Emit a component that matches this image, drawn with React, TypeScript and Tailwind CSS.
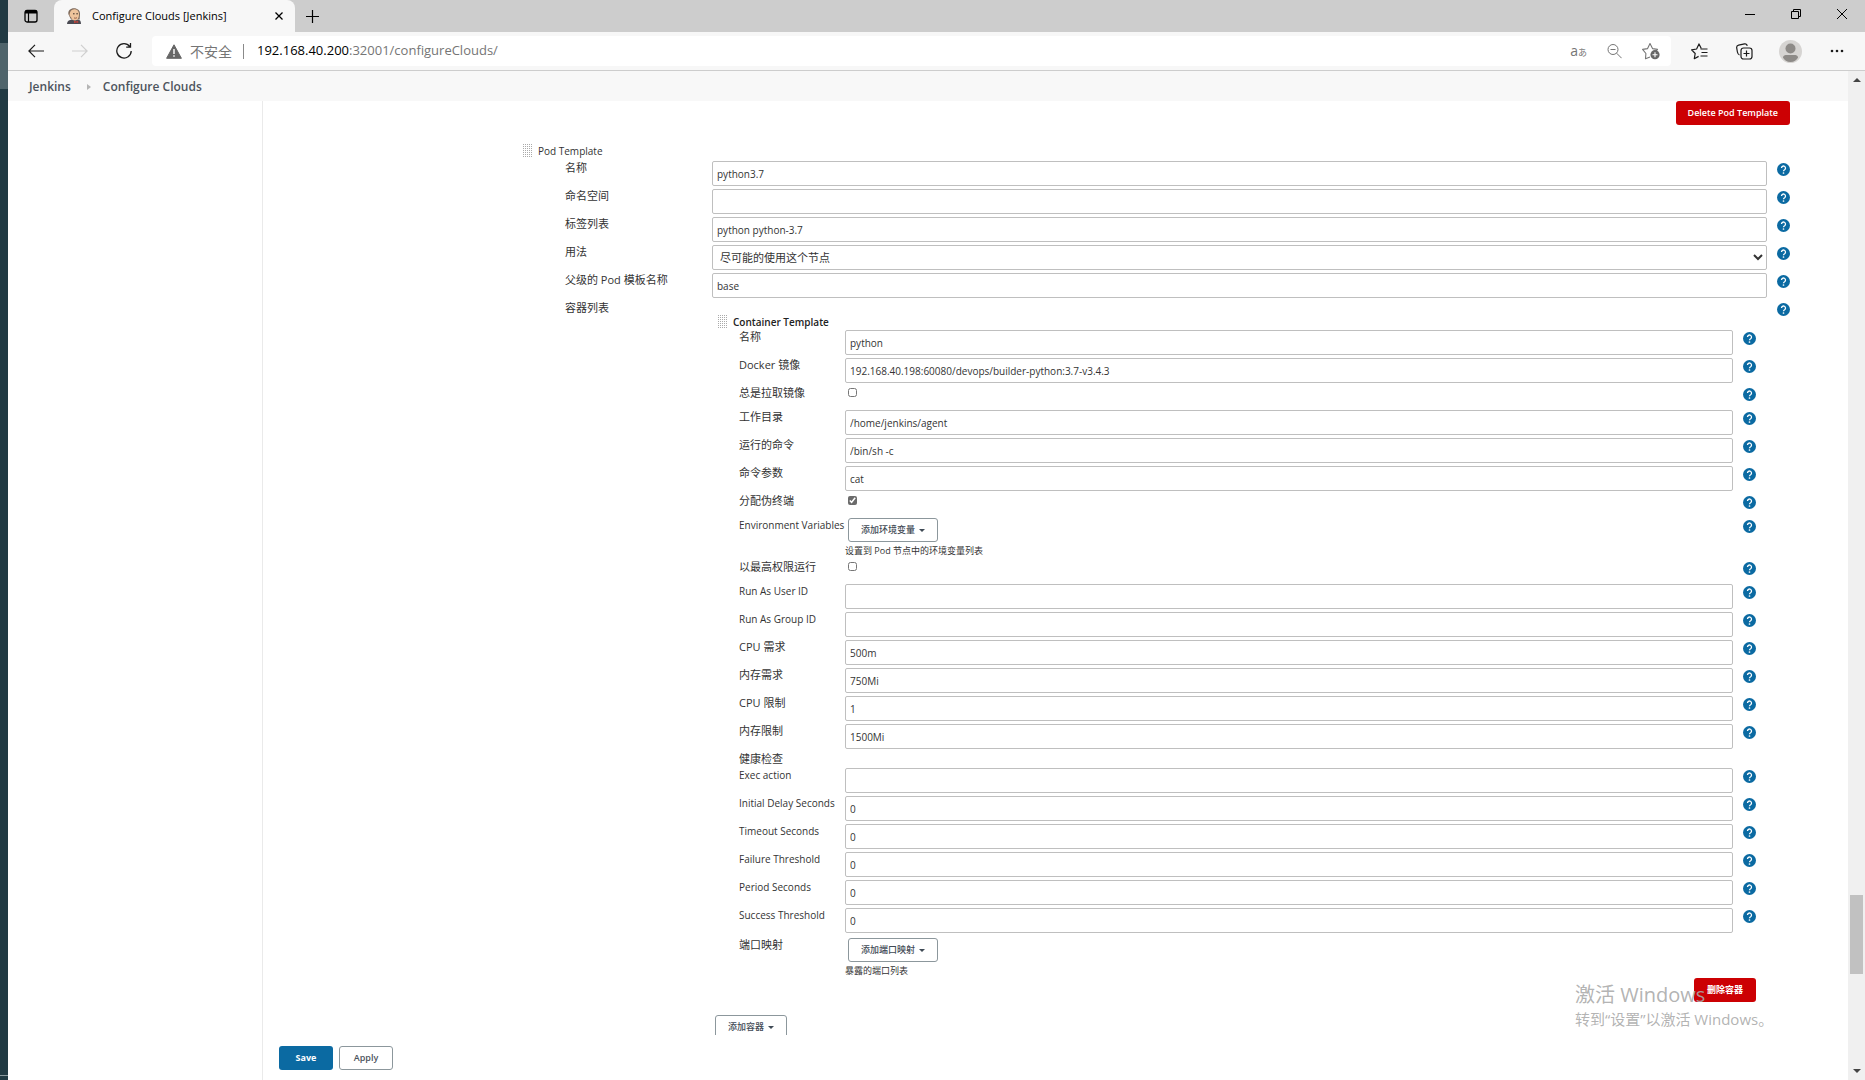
import { useId, useState } from 'react';
import type { ReactNode } from 'react';

type Field = {
  label: string;
  type?: 'text' | 'checkbox';
  value?: string;
  checked?: boolean;
};

const containerFields: Field[] = [
  { label: '名称', value: 'python' },
  { label: 'Docker 镜像', value: '192.168.40.198:60080/devops/builder-python:3.7-v3.4.3' },
  { label: '总是拉取镜像', type: 'checkbox' },
  { label: '工作目录', value: '/home/jenkins/agent' },
  { label: '运行的命令', value: '/bin/sh -c' },
  { label: '命令参数', value: 'cat' },
  { label: '分配伪终端', type: 'checkbox', checked: true },
];

const resourceFields: Field[] = [
  { label: '以最高权限运行', type: 'checkbox' },
  { label: 'Run As User ID' },
  { label: 'Run As Group ID' },
  { label: 'CPU 需求', value: '500m' },
  { label: '内存需求', value: '750Mi' },
  { label: 'CPU 限制', value: '1' },
  { label: '内存限制', value: '1500Mi' },
];

const probeFields: Field[] = [
  { label: 'Exec action' },
  { label: 'Initial Delay Seconds', value: '0' },
  { label: 'Timeout Seconds', value: '0' },
  { label: 'Failure Threshold', value: '0' },
  { label: 'Period Seconds', value: '0' },
  { label: 'Success Threshold', value: '0' },
];

const inputClass =
  'block h-[25px] w-full rounded-[2px] border border-[#bfbfbf] bg-white px-1 text-[10px] text-[#333] outline-none focus:border-[#0b6aa2]';

// Chinese labels are set one pixel larger than Latin ones
const labelSize = (label: string) => (/[\u4e00-\u9fa5]/.test(label) ? 'text-[11px]' : 'text-[10px]');

function HelpButton({ label }: { label: string }) {
  return (
    <button type="button" aria-label={`Help: ${label}`} className="mt-[2px] block size-[13px] shrink-0">
      <svg viewBox="0 0 13 13" className="block size-full">
        <circle cx="6.5" cy="6.5" r="6.5" fill="#0b6aa2" />
        <path d="M4.5 5.100a2 2 0 1 1 3.100 1.600c-.8.5-1.100.7-1.100 1.500" fill="none" stroke="#fff" strokeWidth="1.300" />
        <circle cx="6.5" cy="10" r=".85" fill="#fff" />
      </svg>
    </button>
  );
}

function DragHandle() {
  return (
    <svg viewBox="0 0 9 14" className="h-[14px] w-[9px] shrink-0">
      <path
        d="M.5 0v14M2.500 0v14M4.500 0v14M6.500 0v14M8.500 0v14"
        stroke="#aaa"
        strokeWidth="1"
        strokeDasharray="1 1"
      />
    </svg>
  );
}

function TextInput({ id, value = '' }: { id: string; value?: string }) {
  const [text, setText] = useState(value);
  return <input id={id} type="text" value={text} onChange={(e) => setText(e.target.value)} className={inputClass} />;
}

function PodRow({ label, value, children }: { label: string; value?: string; children?: ReactNode }) {
  const id = useId();
  return (
    <div className="flex min-h-7 items-start pl-[42px]">
      {children ? (
        <span className={`w-[147px] shrink-0 leading-[14px] ${labelSize(label)}`}>{label}</span>
      ) : (
        <label htmlFor={id} className={`w-[147px] shrink-0 leading-[14px] ${labelSize(label)}`}>
          {label}
        </label>
      )}
      <div className="mr-[10px] min-w-0 flex-1">
        {children ?? <TextInput id={id} value={value} />}
      </div>
      <HelpButton label={label} />
    </div>
  );
}

function ContainerRow({ label, type = 'text', value, checked = false }: Field) {
  const id = useId();
  const [on, setOn] = useState(checked);
  return (
    <div className={`flex items-start ${type === 'checkbox' ? 'min-h-6' : 'min-h-7'}`}>
      <label htmlFor={id} className={`w-[106px] shrink-0 leading-[14px] ${labelSize(label)}`}>
        {label}
      </label>
      <div className="mr-[10px] min-w-0 flex-1">
        {type === 'checkbox' ? (
          <input
            id={id}
            type="checkbox"
            checked={on}
            onChange={(e) => setOn(e.target.checked)}
            className="mt-[2px] ml-[3px] block size-[9px] accent-[#6b6b6b]"
          />
        ) : (
          <TextInput id={id} value={value} />
        )}
      </div>
      <HelpButton label={label} />
    </div>
  );
}

function MenuButton({ children }: { children: ReactNode }) {
  return (
    <button
      type="button"
      className="flex h-6 items-center gap-1 rounded-[3px] border border-[#8c979c] bg-white px-3 text-[9px] font-medium text-[#3f4a55]"
    >
      {children}
      <svg viewBox="0 0 6 3" className="h-[3px] w-[6px]">
        <path d="M0 0h6L3 3z" fill="currentColor" />
      </svg>
    </button>
  );
}

function JenkinsIcon() {
  return (
    <svg viewBox="0 0 16 16" className="size-4">
      <path d="M1 16c.2-3 2-4.200 5-4.200h6c2 0 3 1.500 3 4.200z" fill="#4a4a52" />
      <path d="M2.300 6C2 2.500 4.500.3 8 .3S14 2.500 14 6l-.3 5.500H5z" fill="#7d6a5c" />
      <path d="M4 4.500C4.800 1.800 7 1 9 1.200c2.500.2 4 2 4 4.800 0 3.500-1 6.500-4 6.500-2.200 0-3.600-1.500-4-3.500C3.500 8.500 3.200 7 4 4.500z" fill="#efc49c" />
      <path d="M7 5.800h1.600M10.300 5.800h1.600" stroke="#3c3029" strokeWidth="1" />
      <path d="M8 9.800c1 .6 2 .5 3-.2" fill="none" stroke="#8a4f3c" strokeWidth=".9" />
      <path d="M8 12.500l2 1.100 2.200-1.100v2.600L10 14.400l-2 .8z" fill="#b9423a" />
    </svg>
  );
}

function TabBar() {
  return (
    <div className="flex h-8 shrink-0 items-stretch bg-[#cdcdcd] text-black">
      <button type="button" aria-label="Tab actions" className="flex w-[46px] items-center justify-center pr-px">
        <svg viewBox="0 0 14 14" className="size-[14px]" fill="none" stroke="currentColor">
          <rect x="1" y="1.500" width="12" height="11.500" rx="2" strokeWidth="1.300" />
          <path d="M1 3h12" strokeWidth="3" />
          <path d="M4.500 3v10" strokeWidth="1.200" />
        </svg>
      </button>
      <div className="flex w-[241px] items-center rounded-t-lg bg-[#f7f7f7] pr-2 pl-3">
        <JenkinsIcon />
        <span className="ml-[10px] flex-1 text-[11px] whitespace-nowrap">Configure Clouds [Jenkins]</span>
        <button type="button" aria-label="Close tab" className="flex size-4 items-center justify-center">
          <svg viewBox="0 0 8 8" className="size-2" stroke="currentColor" strokeWidth="1.300">
            <path d="M.5.5l7 7M7.500.5l-7 7" />
          </svg>
        </button>
      </div>
      <button type="button" aria-label="New tab" className="flex w-[34px] items-center justify-center">
        <svg viewBox="0 0 13 13" className="size-[13px]" stroke="currentColor" strokeWidth="1.200">
          <path d="M6.500 0v13M0 6.500h13" />
        </svg>
      </button>
      <div className="ml-auto flex items-center gap-[36px] pr-[18px] pb-1">
        <button type="button" aria-label="Minimize">
          <svg viewBox="0 0 10 10" className="size-[10px]" stroke="currentColor">
            <path d="M0 5.500h10" />
          </svg>
        </button>
        <button type="button" aria-label="Restore">
          <svg viewBox="0 0 10 10" className="size-[10px]" fill="none" stroke="currentColor">
            <path d="M.5 2.500h7v7h-7zM2.500 2.500v-2h7v7h-2" />
          </svg>
        </button>
        <button type="button" aria-label="Close">
          <svg viewBox="0 0 10 10" className="size-[10px]" stroke="currentColor">
            <path d="M0 0l10 10M10 0L0 10" />
          </svg>
        </button>
      </div>
    </div>
  );
}

function Toolbar() {
  return (
    <div className="flex h-[39px] shrink-0 items-center border-b border-[#cdcdcd] bg-[#f7f7f7] pr-[21px] pl-5 text-[#1b1b1b]">
      <button type="button" aria-label="Back">
        <svg viewBox="0 0 16 14" className="h-[14px] w-4" fill="none" stroke="currentColor" strokeWidth="1.200">
          <path d="M16 7H1M7 .8L.9 7 7 13.200" />
        </svg>
      </button>
      <button type="button" aria-label="Forward" className="ml-7 text-[#cfcfcf]">
        <svg viewBox="0 0 16 14" className="h-[14px] w-4" fill="none" stroke="currentColor" strokeWidth="1.200">
          <path d="M0 7h15M9 .8L15.100 7 9 13.200" />
        </svg>
      </button>
      <button type="button" aria-label="Refresh" className="ml-7">
        <svg viewBox="0 0 16 16" className="size-4" fill="none" stroke="currentColor" strokeWidth="1.300">
          <path d="M13.800 3.600A7.200 7.200 0 1 0 15.200 8M14.500 0v4.200h-4.300" />
        </svg>
      </button>
      <div className="ml-5 flex h-[30px] flex-1 items-center rounded bg-white pr-[11px] pl-[14px] text-[#757575]">
        <svg viewBox="0 0 16 15" className="h-[15px] w-4">
          <path d="M8 .8L15.400 14.300H.6z" fill="#666" stroke="#666" strokeLinejoin="round" />
          <path d="M8 5v5M8 11.300v1.500" stroke="#fff" strokeWidth="1.400" />
        </svg>
        <span className="ml-2 text-[14px] whitespace-nowrap">不安全</span>
        <span className="mr-[13px] ml-[11px] h-[15px] w-px bg-[#8a8a8a]" />
        <span className="text-[13px] whitespace-nowrap">
          <span className="text-black">192.168.40.200</span>:32001/configureClouds/
        </span>
        <button type="button" aria-label="Translate" className="ml-auto flex items-baseline text-[14px] leading-none">
          a<span className="text-[9px]">あ</span>
        </button>
        <button type="button" aria-label="Zoom out" className="ml-5">
          <svg viewBox="0 0 15 15" className="size-[15px]" fill="none" stroke="currentColor">
            <circle cx="6" cy="5.500" r="5" />
            <path d="M3.500 5.500h5M9.600 9.200l5 5" />
          </svg>
        </button>
        <button type="button" aria-label="Add to favorites" className="ml-5">
          <svg viewBox="0 0 18 18" className="size-[18px]" fill="none" stroke="currentColor" strokeWidth="1.100">
            <path d="M8 15l-4.500 1.700.4-5.200L.6 7.400l5-.8L8 1.500l2.500 5.100 5 .8-1.500 1.800" strokeLinejoin="round" />
            <circle cx="13" cy="12.700" r="4.600" fill="#666" stroke="none" />
            <path d="M13 10.200v5M10.500 12.700h5" stroke="#fff" />
          </svg>
        </button>
      </div>
      <button type="button" aria-label="Favorites" className="ml-5">
        <svg viewBox="0 0 17 17" className="size-[17px]" fill="none" stroke="currentColor" strokeWidth="1.200">
          <path d="M10.300 5.500L8 .9 5.600 6l-5 .8 3.600 3.700-.9 5.200 4.300-2.300" strokeLinejoin="round" />
          <path d="M9.500 6h7M10.500 9.500h6M9.500 13h7" />
        </svg>
      </button>
      <button type="button" aria-label="Collections" className="ml-7">
        <svg viewBox="0 0 17 17" className="size-[17px]" fill="none" stroke="currentColor" strokeWidth="1.200">
          <path d="M3.500 12C2 11.500 1.700 10.500 1.400 9L.7 4.800C.5 3.400 1.200 2.500 2.600 2.200L8.500.9c1.400-.3 2.400.3 2.700 1.900" />
          <rect x="5" y="5" width="11" height="11" rx="2.500" />
          <path d="M10.500 7.500v6M7.500 10.500h6" />
        </svg>
      </button>
      <button type="button" aria-label="Profile" className="ml-[26px]">
        <svg viewBox="0 0 23 23" className="size-[23px]">
          <circle cx="11.500" cy="11.500" r="11.500" fill="#d6d4d2" />
          <circle cx="11.500" cy="8.500" r="5" fill="#8d8a87" />
          <path d="M4 17.500c0-2.200 2-2.600 4-2.600h7c2 0 4 .4 4 2.600-1.200 2.600-4 4.500-7.500 4.500S5.200 20.100 4 17.500z" fill="#8d8a87" />
        </svg>
      </button>
      <button type="button" aria-label="Settings and more" className="ml-7">
        <svg viewBox="0 0 14 4" className="h-1 w-[14px]" fill="currentColor">
          <circle cx="2" cy="2" r="1.300" />
          <circle cx="7" cy="2" r="1.300" />
          <circle cx="12" cy="2" r="1.300" />
        </svg>
      </button>
    </div>
  );
}

function ContainerTemplate() {
  return (
    <div className="pt-[13px] pr-[11px]">
      <div className="flex h-4 items-center gap-[6px] pl-[6px] text-[10px] font-semibold text-[#222]">
        <DragHandle />
        Container Template
      </div>
      <div className="pl-[27px]">
        {containerFields.map((field) => (
          <ContainerRow key={field.label} {...field} />
        ))}
        <div className="flex min-h-[42px] items-start">
          <span className="w-[106px] shrink-0 text-[10px] leading-[14px] whitespace-nowrap">Environment Variables</span>
          <div className="flex-1">
            <div className="flex pl-[3px]">
              <MenuButton>添加环境变量</MenuButton>
            </div>
            <p className="pt-[2px] text-[9px] leading-[14px]">设置到 Pod 节点中的环境变量列表</p>
          </div>
          <HelpButton label="Environment Variables" />
        </div>
        {resourceFields.map((field) => (
          <ContainerRow key={field.label} {...field} />
        ))}
        <h3 className="h-4 text-[11px] leading-[14px]">健康检查</h3>
        {probeFields.map((field) => (
          <ContainerRow key={field.label} {...field} />
        ))}
        <div className="flex min-h-[42px] items-start pt-[2px]">
          <span className="w-[106px] shrink-0 text-[11px] leading-[14px]">端口映射</span>
          <div>
            <div className="flex pl-[3px]">
              <MenuButton>添加端口映射</MenuButton>
            </div>
            <p className="pt-[2px] text-[9px] leading-[14px]">暴露的端口列表</p>
          </div>
        </div>
        <div className="flex justify-end">
          <button type="button" className="h-6 rounded-[3px] bg-[#cc0003] px-[13px] text-[9px] font-bold text-white">
            删除容器
          </button>
        </div>
      </div>
    </div>
  );
}

function PodTemplate() {
  const usageId = useId();
  return (
    <form className="pr-[58px] pl-[260px]">
      <div className="flex justify-end">
        <button type="button" className="h-6 rounded-[3px] bg-[#cc0003] px-3 text-[9px] font-semibold text-white">
          Delete Pod Template
        </button>
      </div>
      <div className="mt-[18px] mb-[2px] flex h-4 items-center gap-[6px] text-[10px]">
        <DragHandle />
        Pod Template
      </div>
      <PodRow label="名称" value="python3.7" />
      <PodRow label="命名空间" />
      <PodRow label="标签列表" value="python python-3.7" />
      <div className="flex min-h-7 items-start pl-[42px]">
        <label htmlFor={usageId} className="w-[147px] shrink-0 text-[11px] leading-[14px]">
          用法
        </label>
        <select
          id={usageId}
          className="mr-[10px] h-[25px] min-w-0 flex-1 rounded-[2px] border border-[#bfbfbf] bg-white px-[3px] text-[11px] text-[#333]"
        >
          <option>尽可能的使用这个节点</option>
          <option>只允许运行绑定到这台机器的Job</option>
        </select>
        <HelpButton label="用法" />
      </div>
      <PodRow label="父级的 Pod 模板名称" value="base" />
      <PodRow label="容器列表">
        <ContainerTemplate />
        <div className="flex pt-[13px] pl-[3px]">
          <MenuButton>添加容器</MenuButton>
        </div>
      </PodRow>
    </form>
  );
}

function Scrollbar() {
  return (
    <div className="flex w-[17px] shrink-0 flex-col items-center bg-[#f0f0f0] py-[7px]">
      <svg viewBox="0 0 8 4" className="h-1 w-2">
        <path d="M0 4h8L4 0z" fill="#444" />
      </svg>
      <div className="flex w-full flex-1 flex-col px-[2px]">
        <div className="grow-[86]" />
        <div className="h-[79px] bg-[#c1c1c1]" />
        <div className="grow-[10]" />
      </div>
      <svg viewBox="0 0 8 4" className="h-1 w-2">
        <path d="M0 0h8L4 4z" fill="#444" />
      </svg>
    </div>
  );
}

export default function App() {
  return (
    <div className="relative flex h-screen overflow-hidden bg-white font-['Open_Sans','Noto_Sans_CJK_SC',sans-serif] text-[#333]">
      {/* Desktop showing to the left of the browser window */}
      <div className="flex w-2 shrink-0 flex-col bg-[#213a43]">
        <div className="mt-[43px] h-[46px] bg-[#4f646b]" />
        <div className="mt-auto mb-1 h-px bg-[#8a999e]" />
      </div>

      <div className="flex min-w-0 flex-1 flex-col">
        <TabBar />
        <Toolbar />
        <div className="flex min-h-0 flex-1">
          <div className="flex min-w-0 flex-1 flex-col">
            <nav className="flex h-[30px] shrink-0 items-center bg-[#f8f8f8] pt-px pl-[21px] text-[12px] font-semibold text-[#4d545d]">
              <a href="#">Jenkins</a>
              <svg viewBox="0 0 4 6" className="mr-3 ml-4 h-[6px] w-1">
                <path d="M0 0l4 3-4 3z" fill="#b5b5b5" />
              </svg>
              <a href="#">Configure Clouds</a>
            </nav>
            <div className="flex min-h-0 flex-1">
              <aside className="w-[255px] shrink-0 border-r border-[#eaeaea]" />
              <main className="flex min-w-0 flex-1 flex-col">
                <div className="min-h-0 flex-1 overflow-hidden">
                  <PodTemplate />
                </div>
                <div className="flex h-[45px] shrink-0 items-start gap-[6px] bg-white pt-[11px] pl-4 text-[9px]">
                  <button type="button" className="h-6 w-[54px] rounded-[3px] bg-[#0b6aa2] font-bold text-white">
                    Save
                  </button>
                  <button
                    type="button"
                    className="h-6 w-[54px] rounded-[3px] border border-[#8c979c] bg-white font-semibold text-[#4d545d]"
                  >
                    Apply
                  </button>
                </div>
              </main>
            </div>
          </div>
          <Scrollbar />
        </div>
      </div>

      {/* Windows activation notice, drawn over everything */}
      <div className="pointer-events-none absolute right-[90px] bottom-[50px] w-[200px] text-[#aaa]/90">
        <p className="text-[20px] leading-[26px] whitespace-nowrap">激活 Windows</p>
        <p className="text-[15px] leading-[22px] whitespace-nowrap">转到“设置”以激活 Windows。</p>
      </div>
    </div>
  );
}
